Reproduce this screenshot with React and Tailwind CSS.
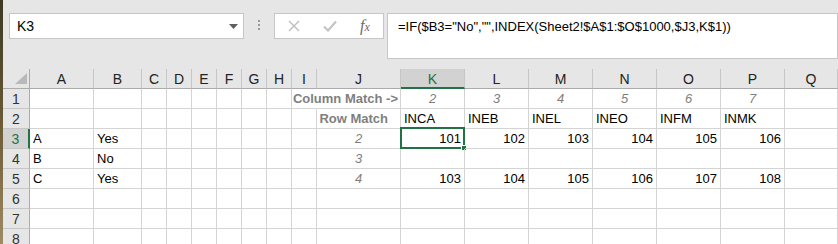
import React from "react";

const FONT = "font-['Liberation_Sans',Arial,sans-serif]";

const colLetters = ["A","B","C","D","E","F","G","H","I","J","K","L","M","N","O","P","Q"];

// cell types: t = text-left, r = right numbers, c = italic gray centered, bj = bold gray right
const rows = [
  { n: 1, cells: { J: { v: "Column Match ->", k: "bj", pr: "pr-[2px]" }, K: { v: "2", k: "c" }, L: { v: "3", k: "c" }, M: { v: "4", k: "c" }, N: { v: "5", k: "c" }, O: { v: "6", k: "c" }, P: { v: "7", k: "c" } } },
  { n: 2, cells: { J: { v: "Row Match", k: "bj", pr: "pr-[12px]" }, K: { v: "INCA", k: "t" }, L: { v: "INEB", k: "t" }, M: { v: "INEL", k: "t" }, N: { v: "INEO", k: "t" }, O: { v: "INFM", k: "t" }, P: { v: "INMK", k: "t" } } },
  { n: 3, cells: { A: { v: "A", k: "t" }, B: { v: "Yes", k: "t" }, J: { v: "2", k: "c" }, K: { v: "101", k: "r" }, L: { v: "102", k: "r" }, M: { v: "103", k: "r" }, N: { v: "104", k: "r" }, O: { v: "105", k: "r" }, P: { v: "106", k: "r" } } },
  { n: 4, cells: { A: { v: "B", k: "t" }, B: { v: "No", k: "t" }, J: { v: "3", k: "c" } } },
  { n: 5, cells: { A: { v: "C", k: "t" }, B: { v: "Yes", k: "t" }, J: { v: "4", k: "c" }, K: { v: "103", k: "r" }, L: { v: "104", k: "r" }, M: { v: "105", k: "r" }, N: { v: "106", k: "r" }, O: { v: "107", k: "r" }, P: { v: "108", k: "r" } } },
  { n: 6, cells: {} },
  { n: 7, cells: {} },
  { n: 8, cells: {} },
];

function DataCell({ row, col, cell }) {
  let kind = "justify-start px-[3px] text-black";
  if (cell) {
    if (cell.k === "r") kind = "justify-end px-[3px] text-black";
    else if (cell.k === "c") kind = "justify-center italic text-[#7f7f7f]";
    else if (cell.k === "bj") kind = "justify-end font-bold text-[#7f7f7f] " + cell.pr;
  }
  const hideRight = row === 1 && col === "I" ? "border-r-white" : "border-r-[#d4d4d4]";
  const selected = row === 3 && col === "K";
  return (
    <div className={`relative h-[20px] border-r border-b border-b-[#d4d4d4] ${hideRight} flex items-end pb-[1px] leading-[17px] whitespace-nowrap ${kind}`}>
      {cell ? <span>{cell.v}</span> : null}
      {selected ? (
        <>
          <div className="absolute -left-[1px] -top-[2px] w-[65px] h-[22px] border-2 border-[#217346] pointer-events-none" />
          <div className="absolute -right-[3px] -bottom-[3px] w-[6px] h-[6px] bg-[#217346] border border-white" />
        </>
      ) : null}
    </div>
  );
}

export default function App() {
  return (
    <div className={`w-[838px] h-[244px] overflow-hidden flex bg-white text-[13px] ${FONT}`}>
      <div className="w-[3px] shrink-0 bg-linear-to-b from-[#3b3a22] via-[#6b5a36] to-[#a08a62]" />
      <div className="flex-1 flex flex-col min-w-0">
        {/* Toolbar / formula bar */}
        <div className="h-[69px] shrink-0 bg-[#e6e6e6] flex items-start pt-[13px]">
          <div className="ml-[6px] w-[235px] h-[26px] bg-white border border-[#c6c6c6] flex items-center pl-[7px] pr-[5px] text-[14px] text-black">
            <span className="flex-1">K3</span>
            <svg width="9" height="5" viewBox="0 0 9 5"><path d="M0 0h9L4.5 5z" fill="#5f5f5f" /></svg>
          </div>
          <div className="ml-[14px] mt-[7px] flex flex-col gap-[2px]">
            <div className="w-[2px] h-[2px] bg-[#9a9a9a]" />
            <div className="w-[2px] h-[2px] bg-[#9a9a9a]" />
            <div className="w-[2px] h-[2px] bg-[#9a9a9a]" />
          </div>
          <div className="ml-[14px] w-[110px] h-[26px] bg-white border border-[#c6c6c6] flex items-center">
            <svg className="ml-[13px]" width="12" height="12" viewBox="0 0 12 12">
              <path d="M1 1L11 11M11 1L1 11" stroke="#bdbdbd" strokeWidth="1.4" fill="none" />
            </svg>
            <svg className="ml-[23px]" width="14" height="12" viewBox="0 0 14 12">
              <path d="M1 6.5L5 10.5L13 1.5" stroke="#c4c4c4" strokeWidth="2.2" fill="none" />
            </svg>
            <span className="ml-[23px] font-['Liberation_Serif',serif] italic text-[16px] leading-none text-[#6a6a6a]">
              f<span className="text-[12px]">x</span>
            </span>
          </div>
          <div className="ml-[3px] flex-1 h-[46px] bg-white border border-[#c6c6c6] pl-[10px] pt-[4px] leading-[17px] text-[13px] text-black whitespace-nowrap">
            =IF($B3="No","",INDEX(Sheet2!$A$1:$O$1000,$J3,K$1))
          </div>
        </div>

        {/* Grid */}
        <div className="grid grid-cols-[27px_64px_48px_25px_25px_25px_25px_25px_25px_25px_84px_64px_64px_64px_64px_64px_64px_1fr]">
          {/* header row */}
          <div className="relative h-[20px] bg-[#e6e6e6] border-r border-b border-r-[#ababab] border-b-[#ababab]">
            <svg className="absolute right-[2px] bottom-[4px]" width="12" height="11" viewBox="0 0 12 11">
              <path d="M12 0V11H0z" fill="#b9b9b9" />
            </svg>
          </div>
          {colLetters.map((c) =>
            c === "K" ? (
              <div key={c} className="h-[20px] bg-[#d2d2d2] border-r border-r-[#c6c6c6] border-b-2 border-b-[#217346] flex items-center justify-center text-[#217346] text-[14px] leading-none pt-[1px]">
                {c}
              </div>
            ) : (
              <div key={c} className="h-[20px] bg-[#e6e6e6] border-r border-r-[#c6c6c6] border-b border-b-[#ababab] flex items-center justify-center text-[#222] text-[14px] leading-none">
                {c}
              </div>
            )
          )}
          {rows.map((r) => (
            <React.Fragment key={r.n}>
              {r.n === 3 ? (
                <div className="h-[20px] bg-[#d2d2d2] border-r-2 border-r-[#217346] border-b border-b-[#c6c6c6] flex items-center justify-center text-[#217346] text-[14px] leading-none">
                  {r.n}
                </div>
              ) : (
                <div className="h-[20px] bg-[#e6e6e6] border-r border-r-[#ababab] border-b border-b-[#c6c6c6] flex items-center justify-center text-[#333] text-[14px] leading-none">
                  {r.n}
                </div>
              )}
              {colLetters.map((c) => (
                <DataCell key={c} row={r.n} col={c} cell={r.cells[c]} />
              ))}
            </React.Fragment>
          ))}
        </div>
      </div>
    </div>
  );
}
